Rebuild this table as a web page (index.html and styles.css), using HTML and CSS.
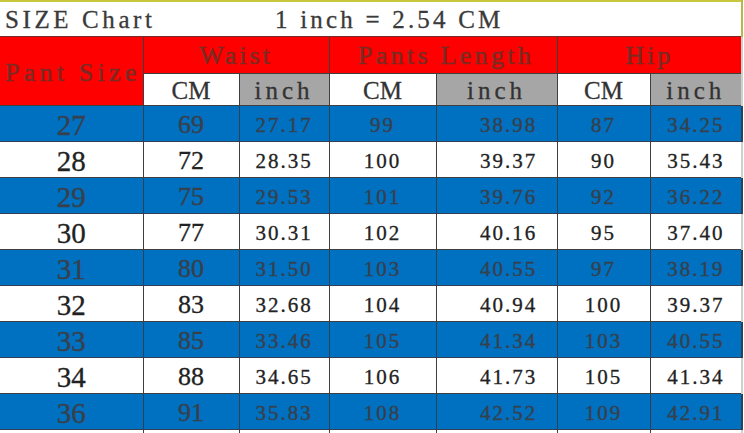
FILE: index.html
```html
<!DOCTYPE html>
<html>
<head>
<meta charset="utf-8">
<link rel="stylesheet" href="styles.css">
</head>
<body>
<table class="chart">
  <colgroup>
    <col class="c1"><col class="c2"><col class="c3"><col class="c4"><col class="c5"><col class="c6"><col class="c7">
  </colgroup>
  <tr class="title-row">
    <td colspan="7"><div class="title"><span class="t-left">SIZE Chart</span><span class="t-right">1 inch = 2.54 CM</span></div></td>
  </tr>
  <tr class="head-row">
    <td rowspan="2" class="head pant">Pant Size</td>
    <td colspan="2" class="head waist">Waist</td>
    <td colspan="2" class="head plen">Pants Length</td>
    <td colspan="2" class="head hip">Hip</td>
  </tr>
  <tr class="sub-row">
    <td class="cm">CM</td><td class="inch">inch</td>
    <td class="cm">CM</td><td class="inch">inch</td>
    <td class="cm">CM</td><td class="inch">inch</td>
  </tr>
  <tr class="row blue"><td class="sz">27</td><td class="wcm">69</td><td class="n">27.17</td><td class="n">99</td><td class="n pl">38.98</td><td class="n">87</td><td class="n">34.25</td></tr>
  <tr class="row white"><td class="sz">28</td><td class="wcm">72</td><td class="n">28.35</td><td class="n">100</td><td class="n pl">39.37</td><td class="n">90</td><td class="n">35.43</td></tr>
  <tr class="row blue"><td class="sz">29</td><td class="wcm">75</td><td class="n">29.53</td><td class="n">101</td><td class="n pl">39.76</td><td class="n">92</td><td class="n">36.22</td></tr>
  <tr class="row white"><td class="sz">30</td><td class="wcm">77</td><td class="n">30.31</td><td class="n">102</td><td class="n pl">40.16</td><td class="n">95</td><td class="n">37.40</td></tr>
  <tr class="row blue"><td class="sz">31</td><td class="wcm">80</td><td class="n">31.50</td><td class="n">103</td><td class="n pl">40.55</td><td class="n">97</td><td class="n">38.19</td></tr>
  <tr class="row white"><td class="sz">32</td><td class="wcm">83</td><td class="n">32.68</td><td class="n">104</td><td class="n pl">40.94</td><td class="n">100</td><td class="n">39.37</td></tr>
  <tr class="row blue"><td class="sz">33</td><td class="wcm">85</td><td class="n">33.46</td><td class="n">105</td><td class="n pl">41.34</td><td class="n">103</td><td class="n">40.55</td></tr>
  <tr class="row white"><td class="sz">34</td><td class="wcm">88</td><td class="n">34.65</td><td class="n">106</td><td class="n pl">41.73</td><td class="n">105</td><td class="n">41.34</td></tr>
  <tr class="row blue"><td class="sz">36</td><td class="wcm">91</td><td class="n">35.83</td><td class="n">108</td><td class="n pl">42.52</td><td class="n">109</td><td class="n">42.91</td></tr>
  <tr class="row white"><td class="sz"></td><td class="wcm"></td><td class="n"></td><td class="n"></td><td class="n pl"></td><td class="n"></td><td class="n"></td></tr>
</table>
</body>
</html>
```

FILE: styles.css
```css
html, body {
  margin: 0;
  padding: 0;
  background: #ffffff;
  overflow: hidden;
}

.chart {
  border-collapse: collapse;
  table-layout: fixed;
  width: 743px;
  font-family: "Liberation Serif", "Noto Sans CJK SC", serif;
  color: #2b2b2b;
}

.c1 { width: 143px; }
.c2 { width: 96px; }
.c3 { width: 90px; }
.c4 { width: 107px; }
.c5 { width: 121px; }
.c6 { width: 93px; }
.c7 { width: 92px; }

.chart td {
  padding: 0;
  border: 1px solid #3f3f3f;
  text-align: center;
  vertical-align: middle;
  white-space: nowrap;
  overflow: hidden;
  line-height: 1;
}

/* title row */
.title-row td {
  height: 33px;
  padding-top: 1px;
  border-top: 2px solid #c8c83c;
  border-left: none;
  border-right: 2px solid #b9b94a;
  border-bottom: 1px solid #7a2a2a;
  text-align: left;
}
.title {
  display: flex;
  align-items: center;
  font-size: 25px;
  color: #3a3a3a;
  -webkit-text-stroke: 0.3px #3a3a3a;
}
.t-left {
  width: 270px;
  padding-left: 5px;
  letter-spacing: 3.6px;
}
.t-right {
  letter-spacing: 3.2px;
}

/* red header */
.head {
  background: #ff0000;
  color: #7c2a22;
  -webkit-text-stroke: 0.5px #7c2a22;
  font-size: 26px;
  height: 34px;
  border-color: #7a2020;
}
.head-row td { border-top: 1px solid #7a2020; }
.pant {
  text-align: left;
  padding-left: 3px !important;
  letter-spacing: 4.2px;
  border-left: none !important;
  border-bottom: 1px solid #7a2020;
  padding-top: 4px !important;
}
.waist { letter-spacing: 3px; padding-top: 2px !important; }
.plen { letter-spacing: 3.3px; padding-left: 6px !important; padding-top: 2px !important; }
.hip { letter-spacing: 3px; padding-top: 2px !important; }

.sub-row td {
  height: 29px;
  font-size: 25px;
  color: #333333;
  -webkit-text-stroke: 0.3px #333333;
  padding-top: 2px;
}
.sub-row .cm { background: #ffffff; }
.sub-row .inch { background: #a6a6a6; letter-spacing: 4px; }

/* data rows */
.row td {
  height: 32px;
  padding-top: 3px;
}
.row td:first-child { border-left: none; }
.row td:last-child, .sub-row td:last-child, .head-row td:last-child { border-right: 2px solid #d0d0d0; }

.row.blue td {
  background: #0070c0;
  color: #37414d;
  -webkit-text-stroke: 0.4px #37414d;
  border-color: #2f3f55;
}
.row.white td {
  background: #ffffff;
  color: #222222;
  -webkit-text-stroke: 0.3px #222222;
}

.sz { font-size: 29px; }
.wcm { font-size: 26px; }
.n { font-size: 21px; letter-spacing: 2px; }
.pl { padding-left: 24px !important; }
```
